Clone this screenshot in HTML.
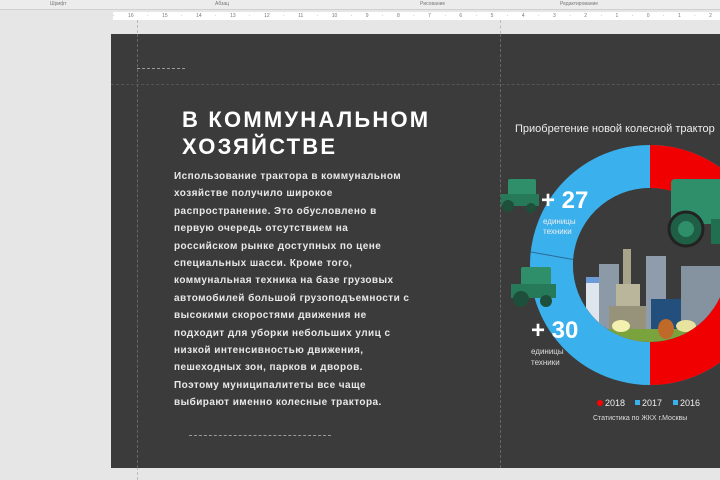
<!DOCTYPE html>
<html><head><meta charset="utf-8"><style>
*{margin:0;padding:0}
body{width:720px;height:480px;overflow:hidden;background:#e6e6e6;font-family:"Liberation Sans",sans-serif;position:relative}
.rib{position:absolute;left:0;top:0;width:720px;height:9px;background:#ececec;border-bottom:1px solid #d0d0d0;font-size:5px;color:#777}
.rib span{position:absolute;top:1px}
.ruler{position:absolute;left:113px;top:12px;width:607px;height:8px;background:#fff;font-size:5px;color:#777;word-spacing:12px;white-space:nowrap;overflow:hidden;line-height:8px}
.slide{position:absolute;left:111px;top:34px;width:609px;height:434px;background:#3b3b3b;overflow:hidden}
.title{position:absolute;left:71px;top:72px;color:#fff;font-weight:bold;font-size:22px;line-height:27px;letter-spacing:2.2px;white-space:nowrap}
.body{position:absolute;left:63px;top:134px;color:#e8e8e8;font-weight:bold;font-size:10px;line-height:17.4px;letter-spacing:0.45px;white-space:nowrap}
.dash{position:absolute;border-top:1px dashed #888}
.vd{position:absolute;border-left:1px dashed #666}
</style></head><body>
<div class="rib"><span style="left:50px">Шрифт</span><span style="left:215px">Абзац</span><span style="left:420px">Рисование</span><span style="left:560px">Редактирование</span></div>
<div class="ruler">· 16 · 15 · 14 · 13 · 12 · 11 · 10 · 9 · 8 · 7 · 6 · 5 · 4 · 3 · 2 · 1 · 0 · 1 · 2 · 3 · 4 · 5 · 6 · 7 · 8 · 9</div>
<div class="vd" style="left:137px;top:20px;height:460px;border-color:#bbb"></div>
<div class="vd" style="left:500px;top:20px;height:14px;border-color:#bbb"></div>
<div class="slide">
<div class="vd" style="left:26px;top:0;height:434px"></div>
<div class="vd" style="left:389px;top:0;height:434px"></div>
<div class="dash" style="left:0;top:50px;width:609px;border-color:#555"></div>
<div class="dash" style="left:26px;top:34px;width:48px;border-color:#999"></div>
<div class="dash" style="left:78px;top:401px;width:142px;border-color:#999"></div>
<div class="title">В КОММУНАЛЬНОМ<br>ХОЗЯЙСТВЕ</div>
<div class="body">Использование трактора в коммунальном<br>хозяйстве получило широкое<br>распространение. Это обусловлено в<br>первую очередь отсутствием на<br>российском рынке доступных по цене<br>специальных шасси. Кроме того,<br>коммунальная техника на базе грузовых<br>автомобилей большой грузоподъемности с<br>высокими скоростями движения не<br>подходит для уборки небольших улиц с<br>низкой интенсивностью движения,<br>пешеходных зон, парков и дворов.<br>Поэтому муниципалитеты все чаще<br>выбирают именно колесные трактора.</div>
<svg style="position:absolute;left:0;top:0" width="609" height="434">
<text x="404" y="98" fill="#eee" font-size="11" font-family="Liberation Sans">Приобретение новой колесной трактор</text>
<circle cx="539" cy="231" r="98.5" fill="none" stroke="#3ab0ec" stroke-width="43"/>
<path d="M539 111 A120 120 0 0 1 539 351 L539 308 A77 77 0 0 0 539 154 Z" fill="#f00000"/>
<line x1="420" y1="218" x2="465" y2="226" stroke="#2a6d96" stroke-width="1"/>
<circle cx="539" cy="231" r="77" fill="#3b3b3b"/>
<clipPath id="c"><circle cx="539" cy="231" r="77"/></clipPath>
<g clip-path="url(#c)">
<rect x="475" y="245" width="18" height="60" fill="#dfe5ec"/><rect x="475" y="243" width="18" height="6" fill="#6d9bd8"/>
<rect x="488" y="230" width="20" height="80" fill="#8c99a6"/>
<rect x="512" y="215" width="8" height="80" fill="#a6a48a"/><rect x="505" y="250" width="24" height="60" fill="#b9b69b"/><rect x="498" y="272" width="38" height="40" fill="#96937a"/>
<rect x="535" y="222" width="20" height="80" fill="#8f9cab"/>
<rect x="540" y="265" width="30" height="45" fill="#234f7c"/>
<rect x="570" y="232" width="50" height="70" fill="#8592a0"/>
<rect x="455" y="295" width="170" height="20" fill="#7aa33e"/>
<ellipse cx="510" cy="292" rx="9" ry="6" fill="#f3f0b0"/><ellipse cx="555" cy="295" rx="8" ry="10" fill="#c06a2a"/><ellipse cx="575" cy="292" rx="10" ry="6" fill="#e8e4a0"/>
</g>
<g fill="#2f8f6a"><rect x="560" y="145" width="60" height="45" rx="4"/><rect x="600" y="185" width="15" height="25" fill="#1f6f50"/><circle cx="575" cy="195" r="17" fill="#1e5f45" stroke="#222" stroke-width="3"/><circle cx="575" cy="195" r="8"/></g>
<g><rect x="397" y="145" width="28" height="16" rx="2" fill="#2f8f6a"/><rect x="390" y="160" width="38" height="12" fill="#267a5a"/><circle cx="397" cy="172" r="6" fill="#1e4f3a"/><circle cx="420" cy="174" r="5" fill="#1e4f3a"/></g>
<g><rect x="410" y="233" width="30" height="18" rx="2" fill="#2f8f6a"/><rect x="400" y="250" width="45" height="14" fill="#267a5a"/><circle cx="410" cy="265" r="8" fill="#1e4f3a"/><circle cx="435" cy="267" r="6" fill="#1e4f3a"/></g>
<text x="430" y="174" fill="#fff" font-size="24" font-weight="bold" font-family="Liberation Sans">+ 27</text>
<text x="432" y="190" fill="#eee" font-size="8" font-family="Liberation Sans">единицы</text>
<text x="432" y="200" fill="#eee" font-size="8" font-family="Liberation Sans">техники</text>
<text x="420" y="304" fill="#fff" font-size="24" font-weight="bold" font-family="Liberation Sans">+ 30</text>
<text x="420" y="320" fill="#ddd" font-size="8" font-family="Liberation Sans">единицы</text>
<text x="420" y="331" fill="#ddd" font-size="8" font-family="Liberation Sans">техники</text>
<circle cx="489" cy="369" r="3" fill="#f00"/><text x="494" y="372" fill="#eee" font-size="9" font-family="Liberation Sans">2018</text>
<rect x="524" y="366" width="5" height="5" fill="#3ab0ec"/><text x="531" y="372" fill="#eee" font-size="9" font-family="Liberation Sans">2017</text>
<rect x="562" y="366" width="5" height="5" fill="#3ab0ec"/><text x="569" y="372" fill="#eee" font-size="9" font-family="Liberation Sans">2016</text>
<text x="482" y="386" fill="#ddd" font-size="7" font-family="Liberation Sans">Статистика по ЖКХ г.Москвы</text>
</svg>
</div>
</body></html>
